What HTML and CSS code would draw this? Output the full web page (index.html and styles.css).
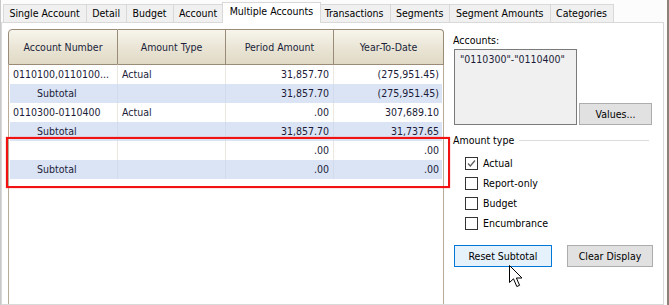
FILE: index.html
```html
<!DOCTYPE html>
<html lang="en">
<head>
  <meta charset="UTF-8" />
  <title>Multiple Accounts</title>
  <link rel="stylesheet" href="styles.css">
</head>
<body>
  <div class="window">
    <div class="tabs">
      <div class="tab">Single Account</div>
      <div class="tab">Detail</div>
      <div class="tab">Budget</div>
      <div class="tab">Account</div>
      <div class="tab active">Multiple Accounts</div>
      <div class="tab">Transactions</div>
      <div class="tab">Segments</div>
      <div class="tab">Segment Amounts</div>
      <div class="tab">Categories</div>
    </div>

    <div class="panel">
      <div class="grid">
        <div class="grid-head">
          <div>Account Number</div>
          <div>Amount Type</div>
          <div>Period Amount</div>
          <div>Year-To-Date</div>
        </div>
        <div class="grid-body">
          <div class="row">
            <span>0110100,0110100...</span><span>Actual</span><span class="num">31,857.70</span><span class="num">(275,951.45)</span>
          </div>
          <div class="row subtotal">
            <span class="label">Subtotal</span><span></span><span class="num">31,857.70</span><span class="num">(275,951.45)</span>
          </div>
          <div class="row">
            <span>0110300-0110400</span><span>Actual</span><span class="num">.00</span><span class="num">307,689.10</span>
          </div>
          <div class="row subtotal">
            <span class="label">Subtotal</span><span></span><span class="num">31,857.70</span><span class="num">31,737.65</span>
          </div>
          <div class="row">
            <span></span><span></span><span class="num">.00</span><span class="num">.00</span>
          </div>
          <div class="row subtotal">
            <span class="label">Subtotal</span><span></span><span class="num">.00</span><span class="num">.00</span>
          </div>
        </div>
        <div class="highlight"></div>
      </div>

      <div class="side">
        <div class="caption">Accounts:</div>
        <div class="accounts">
          <div class="listbox">"0110300"-"0110400"</div>
          <button class="btn values">Values...</button>
        </div>

        <div class="group">
          <span>Amount type</span>
          <span class="group-line"></span>
        </div>

        <div class="checks">
          <div class="check">
            <span class="box">
              <svg width="11" height="11" viewBox="0 0 11 11"><path d="M2 5.5 L4.3 8 L9 2.5" fill="none" stroke="#5c5c5c" stroke-width="1.2"/></svg>
            </span>
            Actual
          </div>
          <div class="check"><span class="box"></span>Report-only</div>
          <div class="check"><span class="box"></span>Budget</div>
          <div class="check"><span class="box"></span>Encumbrance</div>
        </div>

        <div class="actions">
          <button class="btn primary reset">Reset Subtotal</button>
          <button class="btn clear">Clear Display</button>
        </div>
      </div>
    </div>

    <svg class="cursor" width="15" height="24" viewBox="0 0 15 24">
      <path d="M0.5 0.5 L0.5 17.5 L4.5 13.8 L7.8 21.5 L10.6 20.3 L7.4 13 L13 13 Z" fill="#fff" stroke="#000" stroke-width="1" stroke-linejoin="miter"/>
    </svg>
  </div>
</body>
</html>
```

FILE: styles.css
```css
body {
  margin: 0;
  font-family: "DejaVu Sans Condensed", "DejaVu Sans", sans-serif;
  font-stretch: condensed;
  font-size: 10.5px;
  color: #000;
  background: #fff;
}

.window {
  position: relative;
  width: 669px;
  height: 305px;
  box-sizing: border-box;
  border-left: 1px solid #c8c8c8;
  border-right: 2px solid #8d8278;
  background: #fcfcfc;
  display: flex;
  flex-direction: column;
}

/* tabs */
.tabs {
  display: flex;
  align-items: flex-end;
  height: 22px;
  padding-left: 2px;
}

.tab {
  height: 18px;
  box-sizing: border-box;
  padding: 0 6px 0 5.5px;
  margin-left: -1px;
  border: 1px solid #d9d9d9;
  border-bottom: none;
  background: #f0f0f0;
  line-height: 17px;
  white-space: nowrap;
}

.tab:first-child {
  margin-left: 0;
}

.tab.active {
  position: relative;
  z-index: 1;
  height: 21px;
  margin: 0 -2px -1px -2px;
  padding: 0 7px 0 6.5px;
  background: #fff;
  line-height: 16px;
}

/* panel */
.panel {
  flex: 1;
  width: 663px;
  box-sizing: border-box;
  display: flex;
  gap: 9px;
  padding: 6px 0 0 6px;
  border: 1px solid #d9d9d9;
  background: #fff;
  min-height: 0;
}

/* grid */
.grid {
  position: relative;
  width: 436px;
  display: flex;
  flex-direction: column;
}

.grid-head {
  display: grid;
  grid-template-columns: 110px 108px 108px 110px;
  height: 36px;
}

.grid-head div {
  box-sizing: border-box;
  display: flex;
  align-items: center;
  justify-content: center;
  border: 1px solid #9a8b78;
  border-left: none;
  background: linear-gradient(#f7f5ec, #e9e4d4 55%, #e0d9c5);
  color: #1b1f3b;
}

.grid-head div:first-child {
  border-left: 1px solid #9a8b78;
  border-top-left-radius: 4px;
}

.grid-head div:last-child {
  border-top-right-radius: 4px;
}

.grid-body {
  flex: 1;
  border-left: 1px solid #b9ab98;
  border-right: 1px solid #b9ab98;
}

.row {
  display: grid;
  grid-template-columns: 109px 108px 108px 109px;
  height: 19px;
  line-height: 19px;
  color: #1c1c38;
}

.row span {
  padding: 0 4px;
  border-right: 1px solid #ece8df;
  overflow: hidden;
  white-space: nowrap;
}

.row span:last-child {
  border-right: none;
}

.row .num {
  text-align: right;
}

.row.subtotal {
  background: #dae4f5;
  box-shadow: inset 1px 0 #fff, inset -1px 0 #fff;
}

.row.subtotal span {
  border-right-color: #d2dbeb;
}

.row.subtotal .label {
  padding-left: 28px;
}

/* red annotation box */
.highlight {
  position: absolute;
  left: -2px;
  top: 108px;
  width: 444px;
  height: 51px;
  box-sizing: border-box;
  border: 2px solid #f21212;
  box-shadow: 0 0 1px #ff6060;
}

/* side column */
.side {
  width: 200px;
  padding-top: 4px;
  display: flex;
  flex-direction: column;
}

.caption {
  line-height: 14px;
}

.accounts {
  display: flex;
  align-items: flex-end;
  gap: 2px;
  margin: 2px 0 0 1px;
}

.listbox {
  width: 123px;
  height: 76px;
  box-sizing: border-box;
  padding: 3px 5px;
  border: 1px solid #7a7a7a;
  background: #f0f0f0;
  color: #1c1c38;
  line-height: 13px;
}

.btn {
  height: 22px;
  box-sizing: border-box;
  padding: 0;
  border: 1px solid #adadad;
  background: #e1e1e1;
  font: inherit;
  color: #000;
}

.btn.primary {
  background: #e5f1fb;
  border-color: #0078d7;
}

.values {
  width: 73px;
}

.group {
  display: flex;
  align-items: center;
  gap: 5px;
  width: 196px;
  margin-top: 8px;
  line-height: 14px;
}

.group-line {
  flex: 1;
  border-top: 1px solid #dcdcdc;
}

.checks {
  margin-top: 6px;
  padding-left: 12px;
}

.check {
  display: flex;
  align-items: center;
  gap: 5px;
  height: 20px;
}

.box {
  width: 13px;
  height: 13px;
  box-sizing: border-box;
  border: 1px solid #333;
  background: #fff;
}

.box svg {
  display: block;
}

.actions {
  display: flex;
  gap: 15px;
  margin: 12px 0 0 1px;
}

.reset {
  width: 98px;
}

.clear {
  width: 86px;
}

.cursor {
  position: absolute;
  left: 508px;
  top: 265px;
}
```
